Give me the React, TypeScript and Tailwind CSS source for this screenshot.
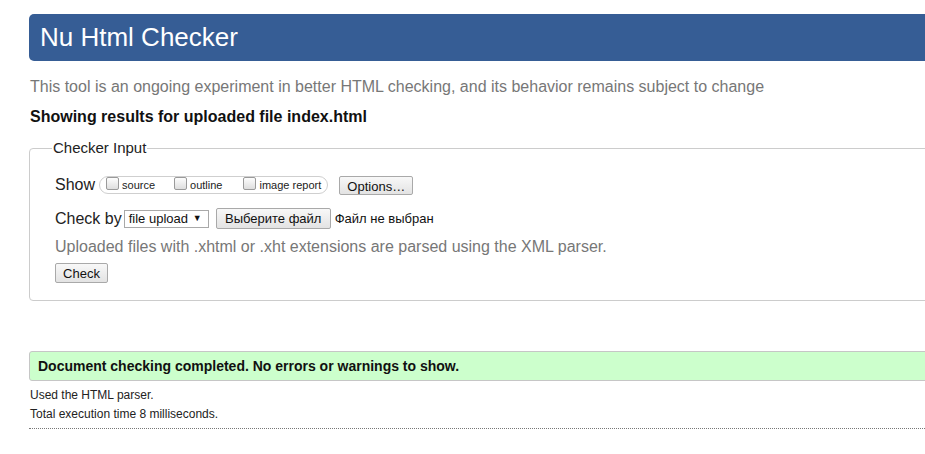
import { useState } from 'react';

const font = "font-['Liberation_Sans',Arial,sans-serif]";

function ShowOptions() {
  const [checked, setChecked] = useState({ source: false, outline: false, image: false });
  const items: Array<{ key: keyof typeof checked; label: string; gap: string }> = [
    { key: 'source', label: 'source', gap: 'mr-[19px]' },
    { key: 'outline', label: 'outline', gap: 'mr-[21px]' },
    { key: 'image', label: 'image report', gap: '' },
  ];
  return (
    <span className="ml-[4px] inline-flex h-[18px] items-center rounded-full border border-[#cfcfcf] pl-[6px] pr-[6px]">
      {items.map((item) => (
        <label key={item.key} className={`flex items-center text-[11px] text-[#222] ${item.gap}`}>
          <input
            type="checkbox"
            checked={checked[item.key]}
            onChange={() => setChecked((c) => ({ ...c, [item.key]: !c[item.key] }))}
            className="mr-[3px] mb-[3px] h-[13px] w-[13px] appearance-none rounded-[2px] border border-[#9a9a9a] bg-gradient-to-b from-[#fdfdfd] to-[#dedede]"
          />
          {item.label}
        </label>
      ))}
    </span>
  );
}

export default function App() {
  return (
    <div className={`h-[454px] w-[925px] overflow-hidden bg-white ${font}`}>
      <div className="ml-[29px] w-[1000px] pt-[14px]">
        <h1 className="flex h-[47px] items-center rounded-l-[5px] bg-[#365d95] pl-[11px] text-[26px] text-white">Nu Html Checker</h1>

        <p className="mt-[16px] pl-[1px] text-[16px] leading-[20px] text-[#777]">
          This tool is an ongoing experiment in better HTML checking, and its behavior remains subject to change
        </p>
        <p className="mt-[10px] pl-[1px] text-[16px] font-bold leading-[20px] text-[#111]">Showing results for uploaded file index.html</p>

        <fieldset className="mt-[12px] rounded-[4px] border border-[#cccccc] pb-[15px] pl-[25px]">
          <legend className="ml-[-3px] px-[1px] text-[15px] leading-[18px] text-[#222]">Checker Input</legend>

          <div className="mt-[18px] flex h-[20px] items-center text-[16px] text-[#222]">
            <span>Show</span>
            <ShowOptions />
            <button className="ml-[11px] h-[19px] w-[74px] rounded-[2px] border border-[#a9a9a9] bg-gradient-to-b from-[#f8f8f8] to-[#e3e3e3] text-[13px] text-[#111]">
              Options…
            </button>
          </div>

          <div className="mt-[13px] flex h-[21px] items-center text-[16px] text-[#222]">
            <span>Check by</span>
            <span className="ml-[2px] flex h-[18px] w-[85px] items-center justify-between border border-[#a9a9a9] bg-white pl-[4px] pr-[6px] text-[13px] text-[#111]">
              file upload
              <span className="text-[9px]">▼</span>
            </span>
            <button className="ml-[7px] h-[21px] w-[115px] rounded-[2px] border border-[#a9a9a9] bg-gradient-to-b from-[#f8f8f8] to-[#e3e3e3] text-[13px] text-[#111]">
              Выберите файл
            </button>
            <span className="ml-[4px] text-[13px] text-[#111]">Файл не выбран</span>
          </div>

          <p className="mt-[8px] text-[16px] leading-[20px] text-[#777]">
            Uploaded files with .xhtml or .xht extensions are parsed using the XML parser.
          </p>

          <button className="mt-[6px] h-[20px] w-[53px] rounded-[2px] border border-[#a9a9a9] bg-gradient-to-b from-[#f8f8f8] to-[#e3e3e3] text-[13px] text-[#111]">
            Check
          </button>
        </fieldset>

        <div className="mt-[50px] flex h-[30px] items-center rounded-l-[3px] border border-[#c6c6c6] bg-[#ccffcc] pl-[8px] text-[14px] font-bold text-[#111]">
          Document checking completed. No errors or warnings to show.
        </div>

        <p className="mt-[5px] pl-[1px] text-[12px] leading-[19px] text-[#222]">Used the HTML parser.</p>
        <p className="pl-[1px] text-[12px] leading-[19px] text-[#222]">Total execution time 8 milliseconds.</p>
        <div className="mt-[4px] border-t border-dotted border-[#777]" />
      </div>
    </div>
  );
}
